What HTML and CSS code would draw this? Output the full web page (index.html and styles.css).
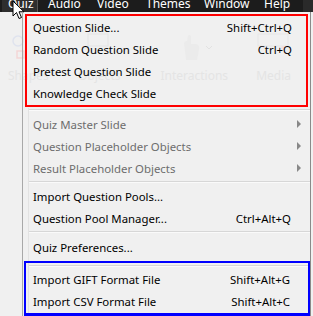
FILE: index.html
```html
<!DOCTYPE html>
<html>
<head>
<meta charset="utf-8">
<link rel="stylesheet" href="styles.css">
</head>
<body>
<div class="app">
  <div class="menubar">
    <span class="mb-item active">Quiz</span>
    <span class="mb-item w-audio">Audio</span>
    <span class="mb-item w-video">Video</span>
    <span class="mb-item w-themes">Themes</span>
    <span class="mb-item w-window">Window</span>
    <span class="mb-item">Help</span>
  </div>
  <div class="toolbar">
    <div class="tb-group shapes">
      <svg width="26" height="30" viewBox="0 0 26 30"><circle cx="10" cy="9" r="5" fill="none" stroke="#dfe3ee" stroke-width="1.5"/><rect x="9" y="19" width="7" height="7" fill="none" stroke="#f3d6d6" stroke-width="1.5"/></svg>
      <span class="tb-label">Shapes</span>
    </div>
    <div class="tb-group objects">
      <svg width="26" height="30" viewBox="0 0 26 30"><rect x="2" y="2" width="20" height="12" fill="none" stroke="#e4e4e4"/></svg>
      <span class="tb-label">Objects</span>
    </div>
    <div class="tb-group inter">
      <svg width="44" height="30" viewBox="0 0 44 30"><path d="M14 28 L12 12 Q12 9 15 9 L16 4 Q17 2 19 4 L19 12 L24 12 Q28 13 27 18 L25 28 Z" fill="#ebebeb"/><path d="M34 14 L37 17 L40 14" fill="none" stroke="#e2e2e2"/></svg>
      <span class="tb-label">Interactions</span>
    </div>
    <div class="tb-group media">
      <svg width="34" height="30" viewBox="0 0 34 30"><rect x="1" y="2" width="30" height="12" fill="none" stroke="#e6e6e6"/><circle cx="26" cy="16" r="2" fill="#f2dede"/></svg>
      <span class="tb-label">Media</span>
    </div>
  </div>

  <svg class="cursor" width="14" height="21" viewBox="0 0 14 21"><path d="M1 1 L1 16 L4.5 12.5 L7 18.5 L9.5 17.5 L7 11.8 L12 11.8 Z" fill="#fff" stroke="#000" stroke-width="1"/></svg>

  <div class="menu">
    <div class="group red">
      <div class="item"><span>Question Slide...</span><span class="key">Shift+Ctrl+Q</span></div>
      <div class="item"><span>Random Question Slide</span><span class="key">Ctrl+Q</span></div>
      <div class="item"><span>Pretest Question Slide</span></div>
      <div class="item"><span>Knowledge Check Slide</span></div>
    </div>
    <div class="sep"></div>
    <div class="item plain disabled"><span>Quiz Master Slide</span><span class="arrow"></span></div>
    <div class="item plain disabled"><span>Question Placeholder Objects</span><span class="arrow"></span></div>
    <div class="item plain disabled"><span>Result Placeholder Objects</span><span class="arrow"></span></div>
    <div class="sep"></div>
    <div class="item plain"><span>Import Question Pools...</span></div>
    <div class="item plain"><span>Question Pool Manager...</span><span class="key">Ctrl+Alt+Q</span></div>
    <div class="sep tall"></div>
    <div class="item plain"><span>Quiz Preferences...</span></div>
    <div class="group blue">
      <div class="sep inner"></div>
      <div class="item"><span>Import GIFT Format File</span><span class="key">Shift+Alt+G</span></div>
      <div class="item"><span>Import CSV Format File</span><span class="key">Shift+Alt+C</span></div>
    </div>
  </div>
</div>
</body>
</html>
```

FILE: styles.css
```css
html, body {
  margin: 0;
  padding: 0;
}
body {
  width: 313px;
  height: 316px;
  overflow: hidden;
  background: #f0f0f0;
  font-family: "Noto Sans", "Open Sans", sans-serif;
}
.app {
  position: relative;
  width: 313px;
  height: 316px;
  background: #f0f0f0;
  overflow: hidden;
}
.menubar {
  height: 12px;
  background: #1c1c1c;
  display: flex;
  overflow: hidden;
  border-right: 10px solid #2a2a2a;
  width: 303px;
}
.mb-item {
  color: #ffffff;
  font-size: 12px;
  line-height: 13px;
  margin-top: -3px;
  height: 16px;
  white-space: nowrap;
  flex: none;
}
.mb-item.active {
  background: #2e2e2e;
  border-right: 1px solid #555;
  margin-left: 2px;
  padding-left: 6px;
  width: 29px;
  margin-right: 10px;
}
.w-audio { width: 49px; }
.w-video { width: 49px; }
.w-themes { width: 58px; }
.w-window { width: 60px; }

.toolbar {
  display: flex;
  padding-top: 20px;
  height: 60px;
}
.tb-group {
  display: flex;
  flex-direction: column;
  align-items: center;
  gap: 6px;
}
.tb-label {
  color: #e4e4e4;
  font-size: 12px;
  line-height: 16px;
}
.shapes { width: 44px; align-items: flex-start; padding-left: 8px; }
.objects { margin-left: 26px; }
.inter { margin-left: 40px; }
.media { margin-left: 28px; }

.cursor {
  position: absolute;
  left: 12px;
  top: 0;
}

.menu {
  position: absolute;
  left: 22px;
  top: 12px;
  width: 287px;
  bottom: 0;
  background: transparent;
  border-left: 1px solid #a8a8a8;
  border-right: 1px solid #8a8a8a;
  font-size: 11.4px;
  color: #000;
}
.menu::before {
  content: "";
  position: absolute;
  left: 5px;
  top: 96px;
  bottom: 0;
  width: 1px;
  background: #e2e2e2;
}
.group.red {
  position: relative;
  margin: 2px 2px 0 2px;
  border: 2px solid #ff0000;
  padding-bottom: 1px;
}
.group.blue {
  position: relative;
  margin: 3px 0 0 1px;
  border: 2px solid #0000ff;
  border-bottom-width: 3px;
  height: 50px;
}
.item {
  height: 22px;
  display: flex;
  align-items: center;
  justify-content: space-between;
  padding: 0 14px 0 6px;
  white-space: nowrap;
  position: relative;
}
.item.plain {
  padding: 0 19px 0 10px;
}
.blue .item {
  padding: 0 18px 0 7px;
}
.item.disabled {
  color: #6d6d6d;
  padding-right: 9px;
}
.arrow {
  width: 0;
  height: 0;
  border-left: 4px solid #888;
  border-top: 4px solid transparent;
  border-bottom: 4px solid transparent;
}
.sep {
  position: relative;
  height: 6px;
  margin-left: 6px;
}
.sep.tall {
  height: 7px;
}
.sep::after {
  content: "";
  position: absolute;
  left: 0;
  right: 0;
  top: 2px;
  height: 1px;
  background: #d7d7d7;
  border-bottom: 1px solid #fafafa;
}
.sep.inner {
  margin-left: 3px;
  height: 5px;
}
```
